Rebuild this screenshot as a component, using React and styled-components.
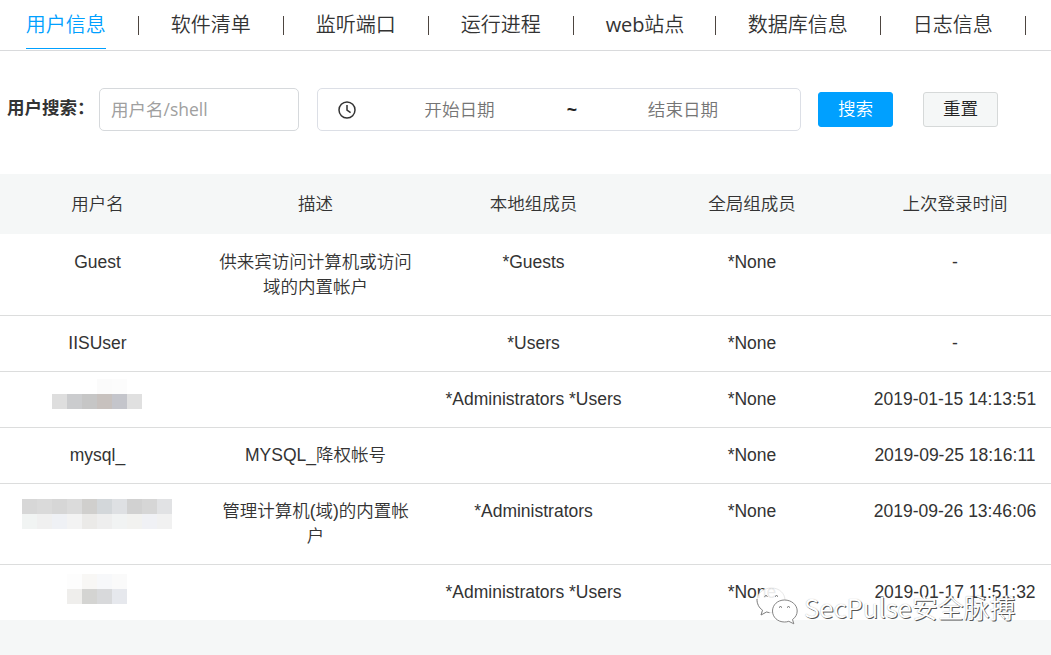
import React from "react";
import styled, { createGlobalStyle } from "styled-components";

const Global = createGlobalStyle`
  *, *::before, *::after { box-sizing: border-box; }
  body {
    margin: 0;
    background: #fff;
    color: #333;
    font: 350 17.6px/25px "Liberation Sans", "Noto Sans CJK SC", sans-serif;
    overflow: hidden;
  }
`;

const Page = styled.div`
  position: relative;
  display: flex;
  flex-direction: column;
  width: 1051px;
  height: 655px;
  overflow: hidden;
`;

const Nav = styled.nav`
  display: flex;
  flex: none;
  height: 51px;
  padding-left: 25.8px;
  border-bottom: 1px solid #d9dadc;
  font: 350 20px/50px "Noto Sans", "Noto Sans CJK SC", sans-serif;
  white-space: nowrap;
`;

const Tab = styled.a`
  flex: none;
  width: ${(p) => p.$width}px;
  height: 49px;
  color: ${(p) => (p.$active ? "#00a0ff" : "#333")};
  border-bottom: 1px solid ${(p) => (p.$active ? "#00a0ff" : "transparent")};
`;

const Latin = styled.span`
  font-family: "Open Sans", sans-serif;
  font-weight: 400;
  letter-spacing: -0.2px;
`;

const Divider = styled.span`
  flex: none;
  display: flex;
  justify-content: center;
  width: 65px;
  padding-top: 16px;

  &::after {
    content: "";
    width: 1px;
    height: 19px;
    background: #4d4540;
  }
`;

const SearchBar = styled.form`
  display: flex;
  flex: none;
  align-items: center;
  height: 123px;
  padding: 0 0 6px 7px;
`;

const Label = styled.label`
  width: 92px;
  font-size: 17.5px;
  font-weight: 700;
  padding-bottom: 2px;
  white-space: nowrap;
`;

const TextInput = styled.input`
  width: 200px;
  height: 43px;
  padding: 0 11px 2px;
  border: 1px solid #d6d9dc;
  border-radius: 5px;
  outline: 0;
  background: #fff;
  font: 400 17.5px "Open Sans", "Noto Sans CJK SC", sans-serif;

  &::placeholder { color: #a0a0a0; opacity: 1; }
`;

const DateRange = styled.div`
  display: flex;
  align-items: center;
  width: 484px;
  height: 43px;
  margin-left: 18px;
  padding-left: 20px;
  border: 1px solid #dcdfe6;
  border-radius: 5px;
`;

const DateField = styled.span`
  width: ${(p) => p.$width}px;
  padding-top: 1px;
  color: #757575;
  text-align: center;
`;

const Tilde = styled.span`
  width: 18px;
  padding-top: 1px;
  text-align: center;
  color: #222;
  font-weight: 700;
`;

const Button = styled.button`
  width: 75px;
  height: 35px;
  margin-left: ${(p) => (p.$primary ? 17 : 30)}px;
  padding: 0;
  border: 1px solid ${(p) => (p.$primary ? "#00a0ff" : "#d6d9d9")};
  border-radius: 3px;
  background: ${(p) => (p.$primary ? "#00a0ff" : "#f5f7f7")};
  color: ${(p) => (p.$primary ? "#fff" : "#222")};
  font: inherit;
`;

const Row = styled.div`
  display: grid;
  flex: none;
  grid-template-columns: 218px 218px 218px 219px 187px;
  height: ${(p) => p.$height}px;
  margin-left: -11.5px;
  padding-top: ${(p) => p.$top || 15}px;
  border-bottom: ${(p) => (p.$last ? "0" : "1px solid #dcdddd")};
  font-size: 17.5px;
`;

const HeadRow = styled(Row)`
  margin-left: 0;
  padding: 18px 0 0;
  background: #f5f7f7;
  border: 0;
  grid-template-columns: 206.5px 218px 218px 219px 187px;

  & > :first-child { padding: 0; margin-left: -11.5px; }
`;

const Cell = styled.div`
  padding: 0 10px;
  text-align: center;
`;

const Footer = styled.footer`
  flex: 1;
  background: #f5f7f7;
`;

const Mosaic = styled.div`
  display: grid;
  grid-template-columns: repeat(${(p) => p.$cols}, 15px);
  grid-auto-rows: 15px;
  justify-content: center;
  margin: ${(p) => p.$offset}px 1px 0 -1px;
`;

const Tile = styled.span`
  background: ${(p) => p.$color};
`;

const Watermark = styled.div`
  position: absolute;
  left: 756px;
  top: 586px;
  display: flex;
  align-items: center;
  height: 40px;
  color: #fff;
  white-space: nowrap;
`;

const Brand = styled.span`
  margin: 1px 0 0 6px;
  font: 350 25.9px/36px "Noto Sans CJK SC", sans-serif;
  text-shadow: 1px 1px 0 #555, 0 0 1px #aaa;
`;

const tabs = [
  ["", "用户信息", 80],
  ["", "软件清单", 80],
  ["", "监听端口", 80],
  ["", "运行进程", 80],
  ["web", "站点", 77],
  ["", "数据库信息", 100],
  ["", "日志信息", 80],
];

const masks = {
  short: {
    cols: 6,
    offset: -8,
    colors: [
      "#fff", "#fff", "#fff", "#fbfbfb", "#fcfcfc", "#fff",
      "#dedede", "#cbccce", "#c6c6c6", "#c7c1be", "#c4c5cb", "#e0e0e0",
    ],
  },
  wide: {
    cols: 10,
    offset: 0,
    colors: [
      "#d7d7d7", "#dadada", "#d6d6d6", "#dbdbdb", "#d0cfcd", "#d3d7da", "#dee0e3", "#d1d1d1", "#d6d6d6", "#e1e2e4",
      "#f1f4f3", "#f0f0f0", "#eff1f5", "#f3f3f3", "#ebeae8", "#eeeeee", "#f1f3f3", "#f2f2f0", "#f0f1f5", "#f1f1f1",
    ],
  },
  small: {
    cols: 4,
    offset: -6,
    colors: ["#fdfdfd", "#f8f7f5", "#f7f8fa", "#fafafa", "#efeeec", "#d4d4d2", "#d8d9db", "#e6e8ed"],
  },
};

const users = [
  { height: 82, top: 16, name: "Guest", desc: "供来宾访问计算机或访问域的内置帐户", local: "*Guests", last: "-" },
  { height: 56, name: "IISUser", local: "*Users", last: "-" },
  { height: 56, mask: masks.short, local: "*Administrators *Users", last: "2019-01-15 14:13:51" },
  { height: 56, name: "mysql_", desc: "MYSQL_降权帐号", last: "2019-09-25 18:16:11" },
  { height: 81, mask: masks.wide, desc: "管理计算机(域)的内置帐户", local: "*Administrators", last: "2019-09-26 13:46:06" },
  { height: 55, mask: masks.small, local: "*Administrators *Users", last: "2019-01-17 11:51:32" },
];

function ClockIcon() {
  return (
    <svg width="18" height="18" viewBox="0 0 18 18" fill="none" stroke="#333" strokeWidth="1.5">
      <circle cx="9" cy="9" r="8" />
      <path d="M9 4v5.2l3.6 2.4" />
    </svg>
  );
}

function WeChatIcon() {
  return (
    <svg width="42" height="40" viewBox="0 0 42 40" fill="#fff" fillOpacity=".9">
      <path d="M15.500 2C7 2 1 7.500 1 14.500c0 4 2 7.500 5.500 9.700L5 29l5.500-3c1.700.5 3.200.7 5 .7C24 26.700 29 21 29 14.500 29 7.500 23.500 2 15.500 2Z" stroke="#ddd" strokeWidth=".7" />
      <path d="M1 13c-.2 4.500 2 8.800 5.500 11.200L5 29l5.500-3 3 .7" fill="none" stroke="#777" strokeWidth=".9" />
      <path
        d="M28.500 14C21.500 14 16.500 19 16.500 25s5 11 12 11c1.500 0 3-.2 4.300-.7l5 2.500-1.300-4.300c3-2 4.700-5.200 4.700-8.500 0-6-5.500-11-12.700-11Z"
        stroke="#777"
        strokeWidth=".9"
        strokeLinejoin="round"
      />
      <g fill="none" stroke="#666" strokeWidth="1">
        <path d="M8.500 10.500q1.500-2 3 0M19 10.500q1.500-2 3 0M23 21.500q1.500-2 3 0M31 21.500q1.500-2 3 0" />
      </g>
    </svg>
  );
}

export default function App() {
  return (
    <Page>
      <Global />
      <Nav>
        {tabs.map(([latin, label, width], i) => (
          <React.Fragment key={label}>
            <Tab $width={width} $active={i === 0}>
              {latin && <Latin>{latin}</Latin>}
              {label}
            </Tab>
            <Divider />
          </React.Fragment>
        ))}
      </Nav>
      <SearchBar>
        <Label>用户搜索：</Label>
        <TextInput placeholder="用户名/shell" />
        <DateRange>
          <ClockIcon />
          <DateField $width={207}>开始日期</DateField>
          <Tilde>~</Tilde>
          <DateField $width={204}>结束日期</DateField>
        </DateRange>
        <Button type="button" $primary>搜索</Button>
        <Button type="button">重置</Button>
      </SearchBar>
      <HeadRow $height={60}>
        {["用户名", "描述", "本地组成员", "全局组成员", "上次登录时间"].map((h) => (
          <Cell key={h}>{h}</Cell>
        ))}
      </HeadRow>
      {users.map((u, i) => (
        <Row key={i} $height={u.height} $top={u.top} $last={i === users.length - 1}>
          <Cell>
            {u.mask ? (
              <Mosaic $cols={u.mask.cols} $offset={u.mask.offset}>
                {u.mask.colors.map((c, k) => <Tile key={k} $color={c} />)}
              </Mosaic>
            ) : u.name}
          </Cell>
          <Cell>{u.desc}</Cell>
          <Cell>{u.local}</Cell>
          <Cell>*None</Cell>
          <Cell>{u.last}</Cell>
        </Row>
      ))}
      <Footer />
      <Watermark>
        <WeChatIcon />
        <Brand>SecPulse安全脉搏</Brand>
      </Watermark>
    </Page>
  );
}
